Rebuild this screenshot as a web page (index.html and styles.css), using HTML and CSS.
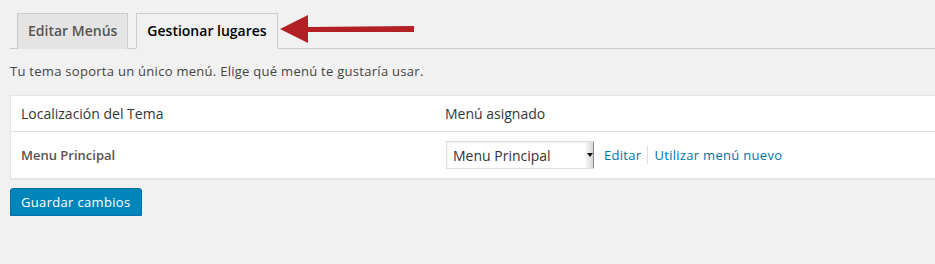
FILE: index.html
```html
<!DOCTYPE html>
<html lang="es">
<head>
    <meta charset="UTF-8">
    <meta name="viewport" content="width=device-width, initial-scale=1.0">
    <title>Menús</title>
    <link rel="stylesheet" href="styles.css">
</head>
<body>
    <div class="wrap">
        <h2 class="nav-tab-wrapper">
            <a class="nav-tab">Editar Menús</a>
            <a class="nav-tab nav-tab-active">Gestionar lugares</a>
        </h2>

        <p class="intro">Tu tema soporta un único menú. Elige qué menú te gustaría usar.</p>

        <table class="menu-locations">
            <colgroup>
                <col class="col-location">
                <col>
            </colgroup>
            <thead>
                <tr>
                    <th>Localización del Tema</th>
                    <th>Menú asignado</th>
                </tr>
            </thead>
            <tbody>
                <tr>
                    <td class="location-name">Menu Principal</td>
                    <td>
                        <div class="menu-cell">
                            <div class="select-box">
                                <select>
                                    <option>Menu Principal</option>
                                </select>
                                <span class="select-arrow"></span>
                            </div>
                            <a class="menu-link">Editar</a>
                            <a class="menu-link menu-link-sep">Utilizar menú nuevo</a>
                        </div>
                    </td>
                </tr>
            </tbody>
        </table>

        <button class="button-primary">Guardar cambios</button>
    </div>

    <svg class="pointer" width="140" height="32" viewBox="0 0 140 32">
        <polygon points="0,15 28,1 28,13 134,12 134,18 28,18 28,29" fill="#b21f24"/>
    </svg>
</body>
</html>
```

FILE: styles.css
```css
body {
    margin: 0;
    background: #f1f1f1;
    font-family: "Open Sans", "Noto Sans", sans-serif;
    font-size: 13px;
    color: #444;
    overflow: hidden;
}
.wrap {
    margin-left: 10px;
    overflow: hidden;
}
.nav-tab-wrapper {
    display: flex;
    margin: 0;
    padding-top: 13px;
    border-bottom: 1px solid #ccc;
    font-size: 14px;
    font-weight: 600;
}
.nav-tab {
    margin-left: 7px;
    margin-bottom: -1px;
    padding: 5px 10px;
    line-height: 24px;
    border: 1px solid #ccc;
    border-bottom: none;
    background: #e4e4e4;
    color: #555;
}
.nav-tab-active {
    margin-left: 8px;
    background: #f1f1f1;
    color: #000;
    border-bottom: 1px solid #f1f1f1;
}
.intro {
    margin: 13px 0;
    line-height: 1.5;
    letter-spacing: 0.28px;
}
.menu-locations {
    width: 1000px;
    table-layout: fixed;
    border-collapse: separate;
    border-spacing: 0;
    background: #fff;
    border: 1px solid #e5e5e5;
    box-shadow: 0 1px 1px rgba(0, 0, 0, 0.04);
}
.col-location {
    width: 424px;
}
.menu-locations th {
    padding: 8px 10px;
    text-align: left;
    font-size: 14px;
    font-weight: 400;
    line-height: 19.6px;
    color: #32373c;
    border-bottom: 1px solid #e1e1e1;
}
.menu-locations td {
    padding: 9px 10px;
    vertical-align: middle;
}
.location-name {
    font-weight: 600;
    color: #555;
}
.menu-cell {
    display: flex;
    align-items: center;
    margin-left: 1px;
}
.select-box {
    position: relative;
    width: 148px;
    height: 28px;
}
.select-box select {
    appearance: none;
    width: 100%;
    height: 100%;
    margin: 0;
    padding: 0 6px;
    border: 1px solid #ddd;
    background: #fff;
    font-family: inherit;
    font-size: 14px;
    color: #333;
    box-shadow: inset 0 1px 2px rgba(0, 0, 0, 0.07);
}
.select-arrow {
    position: absolute;
    top: 1px;
    right: 0;
    width: 7px;
    height: 26px;
    background: linear-gradient(to right, #f4f4f4, #d8d8d8);
    border-right: 1px solid #888;
}
.select-arrow::after {
    content: "";
    position: absolute;
    top: 11px;
    left: 1px;
    border-left: 3px solid transparent;
    border-right: 3px solid transparent;
    border-top: 4px solid #111;
}
.menu-link {
    color: #0073aa;
    line-height: 18px;
    letter-spacing: 0.3px;
}
.menu-link:first-of-type {
    margin-left: 10px;
    padding-right: 6px;
}
.menu-link-sep {
    padding-left: 6px;
    border-left: 1px solid #ddd;
}
.button-primary {
    margin-top: 9px;
    height: 28px;
    padding: 0 10px 1px;
    border: 1px solid #0073aa;
    border-radius: 3px;
    background: #0085ba;
    box-shadow: 0 1px 0 #006799;
    color: #fff;
    font-family: inherit;
    font-size: 13px;
    line-height: 26px;
    letter-spacing: 0.33px;
}
.pointer {
    position: absolute;
    top: 14px;
    left: 280px;
}
```
